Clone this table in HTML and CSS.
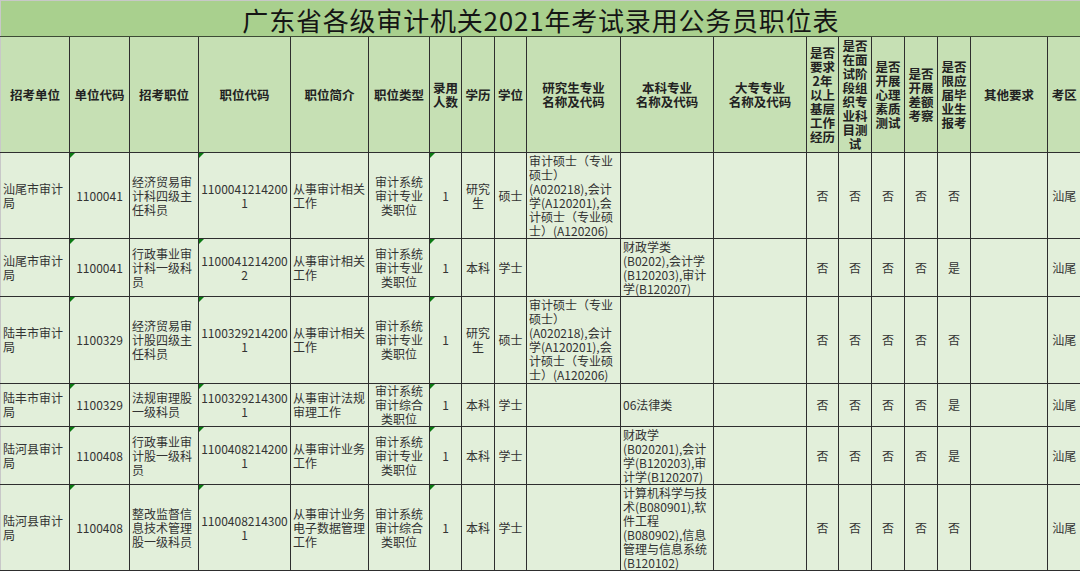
FILE: index.html
```html
<!DOCTYPE html>
<html lang="zh-CN">
<head>
<meta charset="utf-8">
<title>广东省各级审计机关2021年考试录用公务员职位表</title>
<link rel="stylesheet" href="styles.css">
</head>
<body>
<table class="sheet">
  <colgroup>
    <col class="w69"><col class="w60"><col class="w69"><col class="w92"><col class="w78"><col class="w61">
    <col class="w32"><col class="w33"><col class="w32"><col class="w94"><col class="w93"><col class="w93">
    <col class="w32"><col class="w33"><col class="w33"><col class="w33"><col class="w33"><col class="w77"><col class="w33">
  </colgroup>
  <tr class="r-title">
    <td class="title" colspan="19">广东省各级审计机关2021年考试录用公务员职位表</td>
  </tr>
  <tr class="r-head">
    <th class="first">招考单位</th>
    <th>单位代码</th>
    <th>招考职位</th>
    <th>职位代码</th>
    <th>职位简介</th>
    <th>职位类型</th>
    <th>录用<br>人数</th>
    <th>学历</th>
    <th>学位</th>
    <th>研究生专业<br>名称及代码</th>
    <th>本科专业<br>名称及代码</th>
    <th>大专专业<br>名称及代码</th>
    <th>是否<br>要求<br>2年<br>以上<br>基层<br>工作<br>经历</th>
    <th>是否<br>在面<br>试阶<br>段组<br>织专<br>业科<br>目测<br>试</th>
    <th>是否<br>开展<br>心理<br>素质<br>测试</th>
    <th>是否<br>开展<br>差额<br>考察</th>
    <th>是否<br>限应<br>届毕<br>业生<br>报考</th>
    <th>其他要求</th>
    <th class="last">考区</th>
  </tr>
  <tr class="h86">
    <td class="first l">汕尾市审计<br>局</td>
    <td class="tick">1100041</td>
    <td class="l">经济贸易审<br>计科四级主<br>任科员</td>
    <td class="tick">1100041214200<br>1</td>
    <td class="l">从事审计相关<br>工作</td>
    <td>审计系统<br>审计专业<br>类职位</td>
    <td class="tick">1</td>
    <td>研究<br>生</td>
    <td>硕士</td>
    <td class="l">审计硕士（专业<br>硕士）<br>(A020218),会计<br>学(A120201),会<br>计硕士（专业硕<br>士）(A120206)</td>
    <td></td>
    <td></td>
    <td>否</td><td>否</td><td>否</td><td>否</td><td>否</td>
    <td></td>
    <td class="last">汕尾</td>
  </tr>
  <tr class="h58">
    <td class="first l">汕尾市审计<br>局</td>
    <td class="tick">1100041</td>
    <td class="l">行政事业审<br>计科一级科<br>员</td>
    <td class="tick">1100041214200<br>2</td>
    <td class="l">从事审计相关<br>工作</td>
    <td>审计系统<br>审计专业<br>类职位</td>
    <td class="tick">1</td>
    <td>本科</td>
    <td>学士</td>
    <td></td>
    <td class="l">财政学类<br>(B0202),会计学<br>(B120203),审计<br>学(B120207)</td>
    <td></td>
    <td>否</td><td>否</td><td>否</td><td>否</td><td>是</td>
    <td></td>
    <td class="last">汕尾</td>
  </tr>
  <tr class="h87">
    <td class="first l">陆丰市审计<br>局</td>
    <td class="tick">1100329</td>
    <td class="l">经济贸易审<br>计股四级主<br>任科员</td>
    <td class="tick">1100329214200<br>1</td>
    <td class="l">从事审计相关<br>工作</td>
    <td>审计系统<br>审计专业<br>类职位</td>
    <td class="tick">1</td>
    <td>研究<br>生</td>
    <td>硕士</td>
    <td class="l">审计硕士（专业<br>硕士）<br>(A020218),会计<br>学(A120201),会<br>计硕士（专业硕<br>士）(A120206)</td>
    <td></td>
    <td></td>
    <td>否</td><td>否</td><td>否</td><td>否</td><td>否</td>
    <td></td>
    <td class="last">汕尾</td>
  </tr>
  <tr class="h43">
    <td class="first l">陆丰市审计<br>局</td>
    <td class="tick">1100329</td>
    <td class="l">法规审理股<br>一级科员</td>
    <td class="tick">1100329214300<br>1</td>
    <td class="l">从事审计法规<br>审理工作</td>
    <td>审计系统<br>审计综合<br>类职位</td>
    <td class="tick">1</td>
    <td>本科</td>
    <td>学士</td>
    <td></td>
    <td class="l">06法律类</td>
    <td></td>
    <td>否</td><td>否</td><td>否</td><td>否</td><td>是</td>
    <td></td>
    <td class="last">汕尾</td>
  </tr>
  <tr class="h58">
    <td class="first l">陆河县审计<br>局</td>
    <td class="tick">1100408</td>
    <td class="l">行政事业审<br>计股一级科<br>员</td>
    <td class="tick">1100408214200<br>1</td>
    <td class="l">从事审计业务<br>工作</td>
    <td>审计系统<br>审计专业<br>类职位</td>
    <td class="tick">1</td>
    <td>本科</td>
    <td>学士</td>
    <td></td>
    <td class="l">财政学<br>(B020201),会计<br>学(B120203),审<br>计学(B120207)</td>
    <td></td>
    <td>否</td><td>否</td><td>否</td><td>否</td><td>是</td>
    <td></td>
    <td class="last">汕尾</td>
  </tr>
  <tr class="h86">
    <td class="first l">陆河县审计<br>局</td>
    <td class="tick">1100408</td>
    <td class="l">整改监督信<br>息技术管理<br>股一级科员</td>
    <td class="tick">1100408214300<br>1</td>
    <td class="l">从事审计业务<br>电子数据管理<br>工作</td>
    <td>审计系统<br>审计综合<br>类职位</td>
    <td class="tick">1</td>
    <td>本科</td>
    <td>学士</td>
    <td></td>
    <td class="l">计算机科学与技<br>术(B080901),软<br>件工程<br>(B080902),信息<br>管理与信息系统<br>(B120102)</td>
    <td></td>
    <td>否</td><td>否</td><td>否</td><td>否</td><td>否</td>
    <td></td>
    <td class="last">汕尾</td>
  </tr>
</table>
</body>
</html>
```
FILE: styles.css
```css
html, body {
  margin: 0;
  padding: 0;
  background: #e2efda;
}
body {
  font-family: "Noto Sans CJK SC", "Noto Sans", sans-serif;
  color: #333;
  overflow: hidden;
}
.sheet {
  width: 1080px;
  border-collapse: collapse;
  table-layout: fixed;
}
.w32 { width: 32px; }
.w33 { width: 33px; }
.w60 { width: 60px; }
.w61 { width: 61px; }
.w69 { width: 69px; }
.w77 { width: 77px; }
.w78 { width: 78px; }
.w92 { width: 92px; }
.w93 { width: 93px; }
.w94 { width: 94px; }

.sheet td, .sheet th {
  border: 1px solid #2e2e2e;
  padding: 0 2px;
  vertical-align: middle;
  text-align: center;
  white-space: nowrap;
  overflow: hidden;
}
.sheet td {
  font-size: 12px;
  line-height: 14px;
  background: #e2efda;
}
.sheet th {
  font-size: 12.5px;
  line-height: 14px;
  font-weight: 700;
  color: #222;
  background: #c6e0b4;
}
.sheet td.l { text-align: left; }
.sheet .first { border-left: 1px solid #c8c8c8; }
.sheet .last { border-right: none; }

.r-title { height: 36px; }
.sheet td.title {
  background: #a9d08e;
  border-top: 1px solid #c8c8c8;
  border-left: 1px solid #c8c8c8;
  border-right: none;
  border-bottom: 1px solid #3d4a35;
  font-size: 26px;
  line-height: 30px;
  letter-spacing: 0.8px;
  color: #151515;
  text-align: center;
  padding: 2px 0 0;
}
.r-head { height: 116px; }
.h86 { height: 86px; }
.h87 { height: 87px; }
.h58 { height: 58px; }
.h43 { height: 43px; }

.sheet td.tick { position: relative; }
.sheet td.tick::before {
  content: "";
  position: absolute;
  top: 0;
  left: 0;
  border-top: 5px solid #0b7a12;
  border-right: 5px solid transparent;
}
```
